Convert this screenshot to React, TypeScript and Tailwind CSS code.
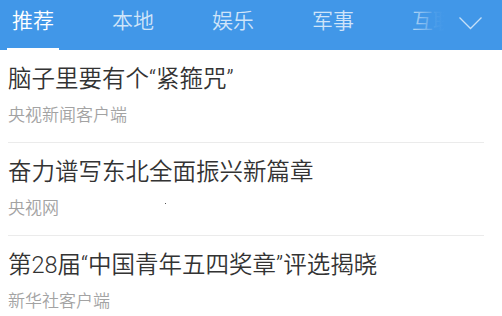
const tabs = ["推荐", "本地", "娱乐", "军事", "互联网"];

const news = [
  { title: "脑子里要有个“紧箍咒”", source: "央视新闻客户端" },
  { title: "奋力谱写东北全面振兴新篇章", source: "央视网" },
  { title: "第28届“中国青年五四奖章”评选揭晓", source: "新华社客户端" },
];

export default function App() {
  return (
    <div
      className="relative w-[502px] h-[316px] overflow-hidden bg-white"
      style={{ fontFamily: 'Roboto, "Noto Sans CJK SC", "Noto Sans", sans-serif' }}
    >
      <header className="relative h-[50px] bg-[#4197e8] overflow-hidden">
        <nav className="flex h-full items-stretch gap-[48px] pl-[7px] whitespace-nowrap">
          {tabs.map((tab, i) => (
            <div key={tab} className="relative flex items-center px-[5px] pb-[8px]">
              <span className={`text-[21px] leading-none font-[350] ${i === 0 ? "text-white" : "text-white/75"}`}>
                {tab}
              </span>
              {i === 0 ? <span className="absolute bottom-0 left-0 right-0 h-[2px] bg-white" /> : null}
            </div>
          ))}
        </nav>
        <div className="absolute right-0 top-0 flex h-full w-[92px] items-start justify-end pr-[20px] pt-[17px] bg-[linear-gradient(to_right,rgba(65,151,232,0.1)_0%,rgba(65,151,232,0.92)_28%,#4197e8_38%)]">
          <svg width="23" height="13" viewBox="0 0 23 13" fill="none">
            <polyline points="0.5,0.5 11.5,11.5 22.5,0.5" stroke="rgba(255,255,255,0.7)" strokeWidth="1.3" />
          </svg>
        </div>
      </header>

      <ul className="pl-[8px] pr-[18px]">
        {news.map((item) => (
          <li key={item.title} className="border-b border-[#ebebeb] pt-[15px] pb-[16px]">
            <p className="text-[23.5px] leading-[28px] font-[350] text-[#333333]">{item.title}</p>
            <p className="mt-[11px] text-[17px] leading-[22px] font-[350] text-[#a3a3a3]">{item.source}</p>
          </li>
        ))}
      </ul>
      <span className="absolute left-[165px] top-[203px] h-px w-px bg-[#555]" />
    </div>
  );
}
